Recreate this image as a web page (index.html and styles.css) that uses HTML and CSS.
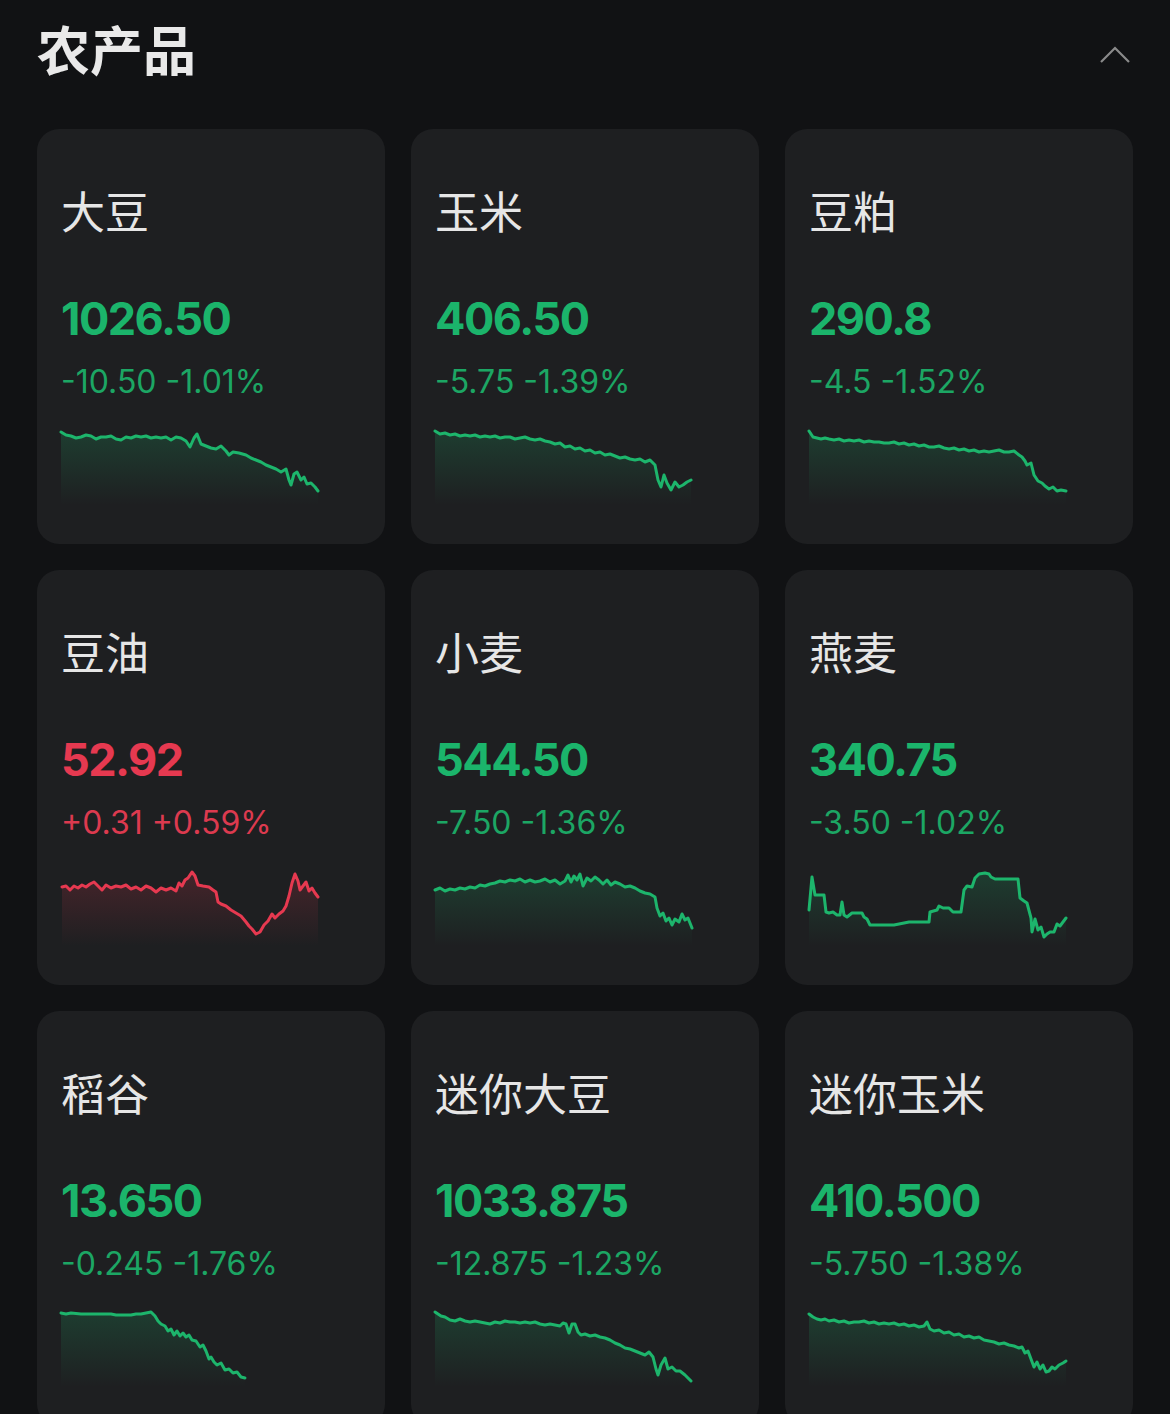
FILE: index.html
```html
<!DOCTYPE html>
<html lang="zh-CN">
<head>
    <meta charset="UTF-8">
    <meta name="viewport" content="width=device-width, initial-scale=1.0">
    <title>农产品</title>
    <link rel="stylesheet" href="styles.css">
</head>
<body>
    <header class="section-head">
        <h1>农产品</h1>
        <svg class="chevron" width="32" height="18" viewBox="0 0 32 18">
            <polyline points="2,16 16,2 30,16" fill="none" stroke="#8a8a8a" stroke-width="2.2"/>
        </svg>
    </header>

    <main class="grid">
        <div class="card down">
            <div class="name">大豆</div>
            <div class="price">1026.50</div>
            <div class="change">-10.50 -1.01%</div>
            <svg class="spark" width="258" height="80" viewBox="0 0 258 80">
                <path class="fill" d="M0,7 L5,10 10,11 15,13 20,12 25,10 30,11 35,14 40,12 45,12 50,11 55,14 60,15 65,12 70,13 75,11 80,12 85,11 90,13 95,12 100,13 105,12 110,15 115,12 120,13 125,16 129,22 133,13 136,9 140,19 145,21 150,23 155,24 160,21 165,26 168,30 172,27 178,28 185,30 190,33 195,35 200,37 205,40 210,42 215,44 220,47 225,44 228,55 230,60 233,49 236,47 240,55 243,52 246,59 250,58 254,62 257,66 L257,80 L0,80 Z"/>
                <path class="line" d="M0,7 L5,10 10,11 15,13 20,12 25,10 30,11 35,14 40,12 45,12 50,11 55,14 60,15 65,12 70,13 75,11 80,12 85,11 90,13 95,12 100,13 105,12 110,15 115,12 120,13 125,16 129,22 133,13 136,9 140,19 145,21 150,23 155,24 160,21 165,26 168,30 172,27 178,28 185,30 190,33 195,35 200,37 205,40 210,42 215,44 220,47 225,44 228,55 230,60 233,49 236,47 240,55 243,52 246,59 250,58 254,62 257,66"/>
            </svg>
        </div>
        <div class="card down">
            <div class="name">玉米</div>
            <div class="price">406.50</div>
            <div class="change">-5.75 -1.39%</div>
            <svg class="spark" width="258" height="80" viewBox="0 0 258 80">
                <path class="fill" d="M0,6 L5,9 10,8 15,10 20,9 25,11 30,10 35,11 40,10 45,12 50,11 55,12 60,11 65,13 70,12 75,12 80,14 85,13 90,12 95,14 100,15 105,14 110,16 115,17 120,19 125,18 130,22 135,21 140,24 145,23 150,26 155,25 160,28 165,27 170,30 175,29 180,31 185,33 190,32 195,34 200,35 205,34 210,37 215,35 220,40 223,55 226,62 229,50 232,58 236,65 240,57 244,62 248,60 252,57 256,55 L256,80 L0,80 Z"/>
                <path class="line" d="M0,6 L5,9 10,8 15,10 20,9 25,11 30,10 35,11 40,10 45,12 50,11 55,12 60,11 65,13 70,12 75,12 80,14 85,13 90,12 95,14 100,15 105,14 110,16 115,17 120,19 125,18 130,22 135,21 140,24 145,23 150,26 155,25 160,28 165,27 170,30 175,29 180,31 185,33 190,32 195,34 200,35 205,34 210,37 215,35 220,40 223,55 226,62 229,50 232,58 236,65 240,57 244,62 248,60 252,57 256,55"/>
            </svg>
        </div>
        <div class="card down">
            <div class="name">豆粕</div>
            <div class="price">290.8</div>
            <div class="change">-4.5 -1.52%</div>
            <svg class="spark" width="258" height="80" viewBox="0 0 258 80">
                <path class="fill" d="M0,6 L4,12 8,13 12,14 16,13 20,14 25,15 30,14 35,16 40,15 45,16 50,15 55,17 60,16 65,17 70,17 75,18 80,18 85,17 90,19 95,18 100,20 105,19 110,21 115,20 120,22 125,22 130,21 135,23 140,24 145,23 150,25 155,24 160,26 165,25 170,27 175,26 180,27 185,26 190,25 195,27 200,27 205,26 210,30 213,32 216,36 218,40 222,38 225,50 229,56 233,58 236,61 240,64 244,62 248,66 252,65 257,66 L257,80 L0,80 Z"/>
                <path class="line" d="M0,6 L4,12 8,13 12,14 16,13 20,14 25,15 30,14 35,16 40,15 45,16 50,15 55,17 60,16 65,17 70,17 75,18 80,18 85,17 90,19 95,18 100,20 105,19 110,21 115,20 120,22 125,22 130,21 135,23 140,24 145,23 150,25 155,24 160,26 165,25 170,27 175,26 180,27 185,26 190,25 195,27 200,27 205,26 210,30 213,32 216,36 218,40 222,38 225,50 229,56 233,58 236,61 240,64 244,62 248,66 252,65 257,66"/>
            </svg>
        </div>

        <div class="card up">
            <div class="name">豆油</div>
            <div class="price">52.92</div>
            <div class="change">+0.31 +0.59%</div>
            <svg class="spark" width="258" height="80" viewBox="0 0 258 80">
                <path class="fill" d="M1,21 L5,20 9,24 13,20 17,22 21,19 25,21 29,18 33,16 37,20 41,24 45,19 50,22 55,20 60,21 65,19 70,23 75,21 80,24 85,20 90,22 95,26 100,22 105,24 110,22 115,25 118,17 121,20 124,14 127,12 131,6 134,10 137,19 142,20 148,21 152,24 155,26 157,36 160,38 165,40 170,44 175,47 180,50 185,56 188,60 191,63 195,68 199,66 203,59 207,55 211,48 214,52 218,48 222,45 225,40 228,30 231,17 234,8 237,15 239,24 242,20 245,16 248,25 251,22 254,27 257,31 L257,80 L1,80 Z"/>
                <path class="line" d="M1,21 L5,20 9,24 13,20 17,22 21,19 25,21 29,18 33,16 37,20 41,24 45,19 50,22 55,20 60,21 65,19 70,23 75,21 80,24 85,20 90,22 95,26 100,22 105,24 110,22 115,25 118,17 121,20 124,14 127,12 131,6 134,10 137,19 142,20 148,21 152,24 155,26 157,36 160,38 165,40 170,44 175,47 180,50 185,56 188,60 191,63 195,68 199,66 203,59 207,55 211,48 214,52 218,48 222,45 225,40 228,30 231,17 234,8 237,15 239,24 242,20 245,16 248,25 251,22 254,27 257,31"/>
            </svg>
        </div>
        <div class="card down">
            <div class="name">小麦</div>
            <div class="price">544.50</div>
            <div class="change">-7.50 -1.36%</div>
            <svg class="spark" width="258" height="80" viewBox="0 0 258 80">
                <path class="fill" d="M0,24 L5,22 10,25 15,23 20,24 25,22 30,23 35,21 40,22 45,19 50,20 55,18 60,17 65,15 70,16 75,14 80,15 85,13 90,16 95,14 100,16 105,15 110,13 115,16 120,14 125,18 130,15 133,9 136,16 139,10 142,14 145,8 148,20 152,12 156,15 160,11 164,14 168,18 172,14 176,19 180,16 185,18 190,21 195,20 200,22 205,25 210,27 215,28 220,31 222,42 225,50 228,47 231,55 234,52 237,59 240,53 244,56 247,48 250,54 253,52 257,62 L257,80 L0,80 Z"/>
                <path class="line" d="M0,24 L5,22 10,25 15,23 20,24 25,22 30,23 35,21 40,22 45,19 50,20 55,18 60,17 65,15 70,16 75,14 80,15 85,13 90,16 95,14 100,16 105,15 110,13 115,16 120,14 125,18 130,15 133,9 136,16 139,10 142,14 145,8 148,20 152,12 156,15 160,11 164,14 168,18 172,14 176,19 180,16 185,18 190,21 195,20 200,22 205,25 210,27 215,28 220,31 222,42 225,50 228,47 231,55 234,52 237,59 240,53 244,56 247,48 250,54 253,52 257,62"/>
            </svg>
        </div>
        <div class="card down">
            <div class="name">燕麦</div>
            <div class="price">340.75</div>
            <div class="change">-3.50 -1.02%</div>
            <svg class="spark" width="258" height="80" viewBox="0 0 258 80">
                <path class="fill" d="M0,44 L3,11 6,29 15,29 17,46 20,47 24,46 28,49 31,49 33,36 35,49 38,51 43,47 48,47 53,47 55,51 58,53 61,59 70,59 85,59 90,58 100,56 110,56 120,56 121,46 128,44 130,40 134,42 140,42 144,46 149,46 152,46 155,24 158,20 163,21 166,12 170,8 176,7 180,8 182,11 186,13 195,13 209,13 211,32 215,35 218,37 222,52 223,66 226,53 229,64 232,61 235,71 238,68 241,66 245,66 248,58 251,60 254,56 257,52 L257,80 L0,80 Z"/>
                <path class="line" d="M0,44 L3,11 6,29 15,29 17,46 20,47 24,46 28,49 31,49 33,36 35,49 38,51 43,47 48,47 53,47 55,51 58,53 61,59 70,59 85,59 90,58 100,56 110,56 120,56 121,46 128,44 130,40 134,42 140,42 144,46 149,46 152,46 155,24 158,20 163,21 166,12 170,8 176,7 180,8 182,11 186,13 195,13 209,13 211,32 215,35 218,37 222,52 223,66 226,53 229,64 232,61 235,71 238,68 241,66 245,66 248,58 251,60 254,56 257,52"/>
            </svg>
        </div>

        <div class="card down">
            <div class="name">稻谷</div>
            <div class="price">13.650</div>
            <div class="change">-0.245 -1.76%</div>
            <svg class="spark" width="258" height="80" viewBox="0 0 258 80">
                <path class="fill" d="M0,6 L5,7 10,6 20,7 30,7 40,7 50,7 55,8 60,8 70,8 75,7 80,7 85,6 90,5 94,9 97,14 100,17 104,19 107,24 110,22 113,28 116,24 119,29 122,26 125,30 128,28 131,33 135,34 139,40 142,38 145,44 148,52 150,50 153,55 156,58 160,56 164,63 168,62 172,66 176,65 180,70 184,71 L184,80 L0,80 Z"/>
                <path class="line" d="M0,6 L5,7 10,6 20,7 30,7 40,7 50,7 55,8 60,8 70,8 75,7 80,7 85,6 90,5 94,9 97,14 100,17 104,19 107,24 110,22 113,28 116,24 119,29 122,26 125,30 128,28 131,33 135,34 139,40 142,38 145,44 148,52 150,50 153,55 156,58 160,56 164,63 168,62 172,66 176,65 180,70 184,71"/>
            </svg>
        </div>
        <div class="card down">
            <div class="name">迷你大豆</div>
            <div class="price">1033.875</div>
            <div class="change">-12.875 -1.23%</div>
            <svg class="spark" width="258" height="80" viewBox="0 0 258 80">
                <path class="fill" d="M0,5 L3,7 6,9 10,10 15,13 20,14 25,12 30,14 35,15 40,14 45,15 50,16 55,17 60,15 65,16 70,14 75,15 80,15 85,16 90,15 95,16 100,15 105,17 110,18 115,17 120,18 125,19 128,16 131,17 134,26 137,17 140,17 143,25 146,28 150,27 155,29 160,28 165,30 170,31 175,33 180,36 185,38 190,41 195,42 200,44 205,46 210,48 214,45 218,50 221,62 223,68 226,58 230,51 233,62 237,60 241,64 245,64 250,68 256,74 L256,80 L0,80 Z"/>
                <path class="line" d="M0,5 L3,7 6,9 10,10 15,13 20,14 25,12 30,14 35,15 40,14 45,15 50,16 55,17 60,15 65,16 70,14 75,15 80,15 85,16 90,15 95,16 100,15 105,17 110,18 115,17 120,18 125,19 128,16 131,17 134,26 137,17 140,17 143,25 146,28 150,27 155,29 160,28 165,30 170,31 175,33 180,36 185,38 190,41 195,42 200,44 205,46 210,48 214,45 218,50 221,62 223,68 226,58 230,51 233,62 237,60 241,64 245,64 250,68 256,74"/>
            </svg>
        </div>
        <div class="card down">
            <div class="name">迷你玉米</div>
            <div class="price">410.500</div>
            <div class="change">-5.750 -1.38%</div>
            <svg class="spark" width="258" height="80" viewBox="0 0 258 80">
                <path class="fill" d="M0,7 L4,10 8,12 12,13 16,12 20,14 25,13 30,15 35,14 40,16 45,15 50,15 55,14 60,16 65,15 70,17 75,16 80,17 85,16 90,18 95,17 100,19 105,18 110,20 115,19 118,15 121,22 125,24 130,23 135,26 140,25 145,28 150,27 155,30 160,29 165,31 170,30 175,33 180,34 185,35 190,37 195,36 200,38 205,39 210,41 213,40 216,46 219,44 222,52 225,60 228,55 231,62 234,58 237,65 240,64 243,60 246,62 250,58 254,56 257,54 L257,80 L0,80 Z"/>
                <path class="line" d="M0,7 L4,10 8,12 12,13 16,12 20,14 25,13 30,15 35,14 40,16 45,15 50,15 55,14 60,16 65,15 70,17 75,16 80,17 85,16 90,18 95,17 100,19 105,18 110,20 115,19 118,15 121,22 125,24 130,23 135,26 140,25 145,28 150,27 155,30 160,29 165,31 170,30 175,33 180,34 185,35 190,37 195,36 200,38 205,39 210,41 213,40 216,46 219,44 222,52 225,60 228,55 231,62 234,58 237,65 240,64 243,60 246,62 250,58 254,56 257,54"/>
            </svg>
        </div>
    </main>

    <svg class="defs" width="0" height="0">
        <defs>
            <linearGradient id="fade-green" x1="0" y1="0" x2="0" y2="1">
                <stop offset="0" stop-color="#1db56c" stop-opacity="0.2"/>
                <stop offset="1" stop-color="#1db56c" stop-opacity="0"/>
            </linearGradient>
            <linearGradient id="fade-red" x1="0" y1="0" x2="0" y2="1">
                <stop offset="0" stop-color="#e63950" stop-opacity="0.2"/>
                <stop offset="1" stop-color="#e63950" stop-opacity="0"/>
            </linearGradient>
        </defs>
    </svg>
</body>
</html>
```

FILE: styles.css
```css
html,
body {
    height: 100%;
}
body {
    margin: 0;
    background: #111214;
    color: #e8e8e8;
    font-family: Inter, "Noto Sans CJK SC", sans-serif;
    overflow: hidden;
}
.section-head {
    display: flex;
    justify-content: space-between;
    align-items: flex-start;
    padding: 22px 39px 0 37px;
}
.section-head h1 {
    margin: 0;
    font-family: "Noto Sans CJK SC", sans-serif;
    font-size: 53px;
    font-weight: 700;
    line-height: 1;
    color: #e9e9e9;
}
.chevron {
    display: block;
    margin-top: 24px;
}
.grid {
    display: grid;
    grid-template-columns: repeat(3, 348px);
    gap: 26px;
    padding: 54px 37px 40px;
}
.card {
    background: #1e1f21;
    border-radius: 22px;
    padding: 59px 24px 39px;
}
.name {
    font-family: "Noto Sans CJK SC", sans-serif;
    font-size: 44px;
    font-weight: 400;
    line-height: 1;
    color: #e6e6e6;
}
.price {
    margin-top: 64px;
    font-size: 45px;
    font-weight: 700;
    line-height: 1;
    letter-spacing: -1.5px;
}
.change {
    margin-top: 25px;
    font-size: 32px;
    font-weight: 400;
    line-height: 1;
    letter-spacing: 0;
}
.spark {
    display: block;
    margin-top: 27px;
    overflow: visible;
}
.spark .line {
    fill: none;
    stroke-width: 3;
    stroke-linejoin: round;
    stroke-linecap: round;
}
.down .price {
    color: #1bb46b;
}
.down .change {
    color: #1ca664;
}
.down .line {
    stroke: #1db56c;
}
.down .fill {
    fill: url(#fade-green);
}
.up .price {
    color: #e63950;
}
.up .change {
    color: #dc3a4f;
}
.up .line {
    stroke: #e63950;
}
.up .fill {
    fill: url(#fade-red);
}
.defs {
    display: block;
}
```
